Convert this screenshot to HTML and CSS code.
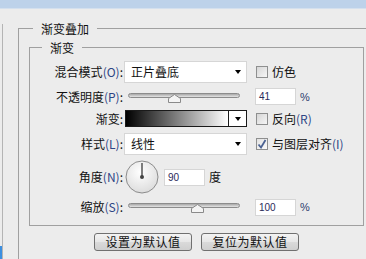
FILE: index.html
```html
<!DOCTYPE html>
<html lang="zh-CN">
<head>
    <meta charset="UTF-8">
    <title>渐变叠加</title>
    <link rel="stylesheet" href="styles.css">
</head>
<body>
    <div class="titlebar"></div>

    <div class="window">
        <div class="sidebar"><span class="sidebar-tab"></span></div>

        <fieldset class="group outer">
            <legend>渐变叠加</legend>

            <fieldset class="group inner">
                <legend>渐变</legend>

                <div class="form">
                    <!-- blend mode -->
                    <span class="label">混合模式<span class="key">(O)</span>:</span>
                    <div class="select"><span>正片叠底</span><i class="caret"></i></div>
                    <label class="check"><span class="box"></span><span>仿色</span></label>

                    <!-- opacity -->
                    <span class="label">不透明度<span class="key">(P)</span>:</span>
                    <div class="slider">
                        <div class="track"></div>
                        <svg class="thumb" style="left: 41%" width="13" height="9" viewBox="0 0 13 9">
                            <polygon points="6.5,0.5 12.5,4.5 12.5,8.5 0.5,8.5 0.5,4.5" fill="#f4f4f4" stroke="#8a8a8a"/>
                        </svg>
                    </div>
                    <div class="value"><span class="field">41</span><span class="unit">%</span></div>

                    <!-- gradient -->
                    <span class="label">渐变:</span>
                    <div class="gradient"><span class="ramp"></span><span class="ramp-drop"><i class="caret"></i></span></div>
                    <label class="check"><span class="box"></span><span>反向<span class="key">(R)</span></span></label>

                    <!-- style -->
                    <span class="label">样式<span class="key">(L)</span>:</span>
                    <div class="select"><span>线性</span><i class="caret"></i></div>
                    <label class="check"><span class="box checked">
                        <svg width="10" height="10" viewBox="0 0 10 10"><path d="M1.5 5.5 L4 8.5 L8.5 1" fill="none" stroke="#4b6292" stroke-width="1.8"/></svg>
                    </span><span>与图层对齐<span class="key">(I)</span></span></label>

                    <!-- angle -->
                    <span class="label">角度<span class="key">(N)</span>:</span>
                    <div class="angle">
                        <svg class="dial" width="34" height="34" viewBox="0 0 34 34">
                            <defs>
                                <radialGradient id="dialFill" cx="45%" cy="35%" r="70%">
                                    <stop offset="0" stop-color="#ffffff"/>
                                    <stop offset="1" stop-color="#dadada"/>
                                </radialGradient>
                            </defs>
                            <circle cx="17" cy="17" r="16" fill="url(#dialFill)" stroke="#8c8c8c"/>
                            <line x1="17" y1="17" x2="17" y2="3" stroke="#555" stroke-width="1.5"/>
                            <circle cx="17" cy="17" r="2" fill="#444"/>
                        </svg>
                        <span class="field">90</span>
                        <span class="unit-cn">度</span>
                    </div>
                    <span></span>

                    <!-- scale -->
                    <span class="label">缩放<span class="key">(S)</span>:</span>
                    <div class="slider">
                        <div class="track"></div>
                        <svg class="thumb" style="left: 62%" width="13" height="9" viewBox="0 0 13 9">
                            <polygon points="6.5,0.5 12.5,4.5 12.5,8.5 0.5,8.5 0.5,4.5" fill="#f4f4f4" stroke="#8a8a8a"/>
                        </svg>
                    </div>
                    <div class="value"><span class="field">100</span><span class="unit">%</span></div>
                </div>
            </fieldset>

            <div class="actions">
                <button>设置为默认值</button>
                <button>复位为默认值</button>
            </div>
        </fieldset>
    </div>
</body>
</html>
```

FILE: styles.css
```css
body {
    margin: 0;
    height: 259px;
    overflow: hidden;
    background: #ececec;
    font-family: "Noto Sans CJK SC", "Noto Sans", sans-serif;
    font-size: 12px;
    line-height: 14px;
    color: #111;
}

.titlebar {
    height: 8px;
    background: #bdd2ea;
    border-bottom: 1px solid #d4e0ee;
}

.window {
    display: flex;
    height: 250px;
}

.sidebar {
    width: 2px;
    margin-top: 15px;
    border-right: 1px solid #b4b4b4;
    position: relative;
}

.sidebar-tab {
    position: absolute;
    left: 0;
    bottom: 0;
    width: 2px;
    height: 13px;
    background: #3d8fe0;
}

.group {
    margin: 0;
    min-width: 0;
    border: 1px solid #a0a0a0;
}

.group legend {
    padding: 0 8px;
    line-height: 15px;
}

.outer {
    flex: 1;
    margin-top: 12px;
    margin-left: 15px;
    padding: 4px 2px 0 10px;
    border-right: none;
    border-bottom: none;
}

.outer > legend {
    margin-left: 4px;
}

.inner {
    padding: 5px 0 5px 0;
}

.inner > legend {
    margin-left: 12px;
}

.form {
    display: grid;
    grid-template-columns: 94px 123px auto;
    grid-template-rows: 24px 25px 19px 32px 34px 26px;
    align-items: center;
}

.label {
    text-align: right;
    padding-right: 1px;
    white-space: nowrap;
}

.key {
    color: #2d4585;
}

.select {
    height: 20px;
    display: flex;
    align-items: center;
    justify-content: space-between;
    padding: 0 5px 0 6px;
    background: #fff;
    border: 1px solid #d6d6d6;
}

.caret {
    width: 0;
    height: 0;
    border-left: 3.5px solid transparent;
    border-right: 3.5px solid transparent;
    border-top: 4px solid #000;
}

.check {
    display: flex;
    align-items: center;
    gap: 4px;
    margin-left: 9px;
    white-space: nowrap;
}

.box {
    width: 10px;
    height: 10px;
    border: 1px solid #8e8f8f;
    background: linear-gradient(135deg, #d6d6d6, #f6f6f6);
    display: flex;
    align-items: center;
    justify-content: center;
}

.box.checked {
    background: linear-gradient(135deg, #e2e2e2, #fafafa);
}

.slider {
    position: relative;
    align-self: start;
    margin: 9px 7px 0 4px;
    height: 10px;
}

.track {
    height: 3px;
    border: 1px solid #8c8c8c;
    border-radius: 3px;
    background: linear-gradient(#a8a8a8, #e4e4e4);
}

.thumb {
    position: absolute;
    top: 1px;
    margin-left: -6px;
}

.value {
    display: flex;
    align-items: center;
    gap: 4px;
    margin-left: 8px;
}

.field {
    width: 36px;
    height: 15px;
    padding-left: 3px;
    background: #fff;
    border: 1px solid #d6d6d6;
    font-family: "Liberation Sans", sans-serif;
    font-size: 10px;
    line-height: 15px;
    color: #2a2a5a;
}

.unit {
    font-family: "Liberation Sans", sans-serif;
    font-size: 11px;
    color: #2d3d6d;
}

.gradient {
    display: flex;
    height: 15px;
    margin-left: 1px;
    border: 1px solid #1a1a1a;
}

.ramp {
    flex: 1;
    background: linear-gradient(to right, #000, #fff);
    border-right: 1px solid #1a1a1a;
}

.ramp-drop {
    width: 17px;
    background: #fff;
    display: flex;
    align-items: center;
    justify-content: center;
}

.angle {
    display: flex;
    align-items: center;
    margin-left: 1px;
    white-space: nowrap;
}

.angle .field {
    margin-left: 5px;
}

.unit-cn {
    margin-left: 4px;
}

.actions {
    display: flex;
    justify-content: center;
    gap: 9px;
    margin-top: 7px;
}

.actions button {
    width: 98px;
    height: 18px;
    padding: 0;
    border: 1px solid #707070;
    border-radius: 3px;
    background: linear-gradient(#f3f3f3, #e6e6e6 50%, #dadada 51%, #cfcfcf);
    font-family: "Noto Sans CJK SC", sans-serif;
    font-size: 12px;
    line-height: 14px;
    letter-spacing: 0.5px;
    color: #111;
}
```
